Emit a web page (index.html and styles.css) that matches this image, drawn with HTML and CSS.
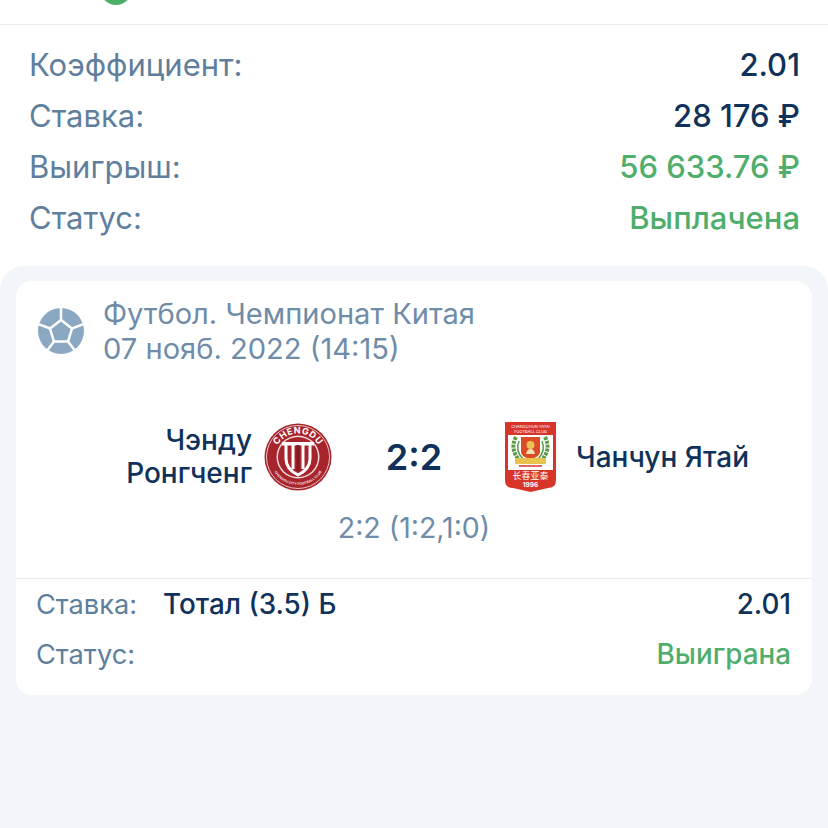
FILE: index.html
```html
<!DOCTYPE html>
<html>
<head>
    <meta charset="UTF-8">
    <title>Ставка</title>
    <link rel="stylesheet" href="styles.css">
</head>
<body>
    <div class="top-strip"><span class="top-dot"></span></div>

    <section class="summary">
        <div class="summary-row"><span class="muted">Коэффициент:</span><span class="strong">2.01</span></div>
        <div class="summary-row"><span class="muted">Ставка:</span><span class="strong">28 176 ₽</span></div>
        <div class="summary-row"><span class="muted">Выигрыш:</span><span class="green">56 633.76 ₽</span></div>
        <div class="summary-row"><span class="muted">Статус:</span><span class="green">Выплачена</span></div>
    </section>

    <section class="panel">
        <div class="card">
            <div class="card-head">
                <svg class="ball" viewBox="0 0 46 46">
                    <circle cx="23" cy="23" r="23" fill="#8aa8c2"/>
                    <g fill="none" stroke="#fff" stroke-width="2.500">
                        <polygon points="23,12 34,20.500 30,33.500 16,33.500 12,20.500"/>
                        <path d="M23 12V0M34 20.500L46 16M30 33.500L38 44M16 33.500L8 44M12 20.500L0 16"/>
                    </g>
                </svg>
                <div class="card-title">
                    <div>Футбол. Чемпионат Китая</div>
                    <div>07 нояб. 2022 (14:15)</div>
                </div>
            </div>

            <div class="match">
                <div class="team team-left">
                    <span class="team-name">Чэнду<br>Ронгченг</span>
                    <svg class="logo-round" viewBox="0 0 68 68">
                        <circle cx="34" cy="34" r="33.500" fill="#a8242c"/>
                        <circle cx="34" cy="34" r="31.500" fill="none" stroke="#e6c3c3" stroke-width="1"/>
                        <circle cx="34" cy="34" r="21.500" fill="#f3dcdc"/>
                        <circle cx="34" cy="34" r="20" fill="#a8242c"/>
                        <path id="arcTop" d="M10.500 34a23.500 23.500 0 0 1 47 0" fill="none"/>
                        <path id="arcBottom" d="M6 34a28 28 0 0 0 56 0" fill="none"/>
                        <text class="logo-text"><textPath href="#arcTop" startOffset="50%" text-anchor="middle">CHENGDU</textPath></text>
                        <text class="logo-small"><textPath href="#arcBottom" startOffset="50%" text-anchor="middle">CHENGDU CITY FOOTBALL CLUB</textPath></text>
                        <path d="M18 19h32v3.500H18z" fill="#fff"/>
                        <g fill="none" stroke="#fff" stroke-width="3">
                            <path d="M22 22v14q0 10 12 16q12-6 12-16V22"/>
                            <path d="M29 22v24M39 22v24"/>
                        </g>
                        <path d="M32.500 22h3v26h-3z" fill="#7d1a20"/>
                    </svg>
                </div>
                <div class="score">2:2</div>
                <div class="team team-right">
                    <svg class="logo-shield" viewBox="0 0 51 70">
                        <path d="M0 0h51v58q0 8-8 8l-17.500 4l-17.500-4q-8 0-8-8z" fill="#d8352a"/>
                        <text x="25.500" y="6" class="shield-small">CHANGCHUN YATAI</text>
                        <text x="25.500" y="11" class="shield-small">FOOTBALL CLUB</text>
                        <rect x="3" y="13" width="45" height="35" fill="#fff"/>
                        <g fill="none" stroke="#5f9a4a">
                            <path d="M11 15q-7 13 5 25M40 15q7 13-5 25" stroke-width="4" stroke-dasharray="3 1"/>
                            <path d="M14 19q-4 10 4 18M37 19q4 10-4 18" stroke-width="1.500"/>
                        </g>
                        <path d="M16 15h19v15q0 5-9.500 7q-9.500-2-9.500-7z" fill="#dd4a26"/>
                        <circle cx="25.500" cy="23" r="4" fill="#eac25a"/>
                        <path d="M21 32q1-5 4.500-5t4.500 5z" fill="#f3e2b0"/>
                        <rect x="10" y="36" width="31" height="6" fill="#e7c34d"/>
                        <path d="M14 44h23" stroke="#d8352a" stroke-width="1.500"/>
                        <text x="25.500" y="57" class="shield-cn">长春亚泰</text>
                        <text x="25.500" y="65" class="shield-year">1996</text>
                    </svg>
                    <span class="team-name">Чанчун Ятай</span>
                </div>
            </div>
            <div class="sub-score">2:2 (1:2,1:0)</div>

            <div class="bet">
                <div class="bet-row">
                    <span class="muted bet-label">Ставка:</span>
                    <span class="strong bet-name">Тотал (3.5) Б</span>
                    <span class="strong">2.01</span>
                </div>
                <div class="bet-row">
                    <span class="muted bet-label">Статус:</span>
                    <span class="green">Выиграна</span>
                </div>
            </div>
        </div>
    </section>
</body>
</html>
```

FILE: styles.css
```css
html, body {
    margin: 0;
    height: 100%;
}

body {
    width: 828px;
    height: 828px;
    overflow: hidden;
    display: flex;
    flex-direction: column;
    background: #fff;
    font-family: "Inter", "Roboto", "Liberation Sans", sans-serif;
    color: #10325a;
}

.top-strip {
    height: 24px;
    margin-bottom: 14px;
    padding-left: 100px;
    border-bottom: 1px solid #e9ebee;
    overflow: hidden;
    display: flex;
    align-items: flex-end;
}

.top-dot {
    width: 32px;
    height: 32px;
    flex: none;
    margin-bottom: 19px;
    border-radius: 50%;
    background: #4caf66;
}

.muted { color: #5f7f9d; }
.strong { color: #10325a; font-weight: 500; }
.green { color: #4fae6c; font-weight: 500; }

.summary {
    padding: 0 28px 23px 29px;
    font-size: 31px;
}

.summary-row {
    height: 51px;
    display: flex;
    align-items: center;
    justify-content: space-between;
}

.panel {
    flex: 1;
    padding: 15px 16px;
    background: #f2f5fa;
    border-radius: 24px 24px 0 0;
}

.card {
    background: #fff;
    border-radius: 16px;
    padding-bottom: 16px;
}

.card-head {
    display: flex;
    align-items: center;
    gap: 19px;
    padding: 15px 22px 0;
}

.ball {
    width: 46px;
    height: 46px;
    flex: none;
}

.card-title {
    font-size: 29.100px;
    line-height: 35px;
    color: #6f8ca8;
}

.match {
    display: grid;
    grid-template-columns: 1fr 164px 1fr;
    align-items: center;
    margin-top: 56px;
}

.team {
    display: flex;
    align-items: center;
    gap: 12px;
}

.team-left {
    justify-content: flex-end;
    text-align: right;
}

.team-right {
    padding-left: 9px;
    gap: 20px;
}

.team-name {
    font-size: 28px;
    line-height: 33px;
    font-weight: 500;
}

.logo-round {
    width: 68px;
    height: 68px;
    flex: none;
}

.logo-shield {
    width: 51px;
    height: 70px;
    flex: none;
}

.logo-text {
    font-size: 9px;
    font-weight: 700;
    fill: #fff;
    letter-spacing: 0.5px;
}

.logo-small {
    font-size: 3.500px;
    font-weight: 700;
    fill: #f3dcdc;
}

.shield-small {
    font-size: 4px;
    fill: #fff;
    text-anchor: middle;
}

.shield-cn {
    font-family: "Noto Sans CJK SC", sans-serif;
    font-size: 9px;
    fill: #fff;
    text-anchor: middle;
}

.shield-year {
    font-size: 6.500px;
    font-weight: 700;
    fill: #fff;
    text-anchor: middle;
}

.score {
    text-align: center;
    font-size: 36px;
    font-weight: 600;
}

.sub-score {
    margin-top: 17px;
    text-align: center;
    font-size: 28.500px;
    line-height: 38px;
    color: #6f8ca8;
}

.bet {
    margin-top: 31px;
    border-top: 1px solid #e9ebee;
    padding: 0 21px 0 20px;
    font-size: 27.800px;
}

.bet-row {
    height: 50px;
    display: flex;
    align-items: center;
    justify-content: space-between;
}

.bet-label { width: 127px; font-size: 27.200px; }

.bet-name { margin-right: auto; }
```
